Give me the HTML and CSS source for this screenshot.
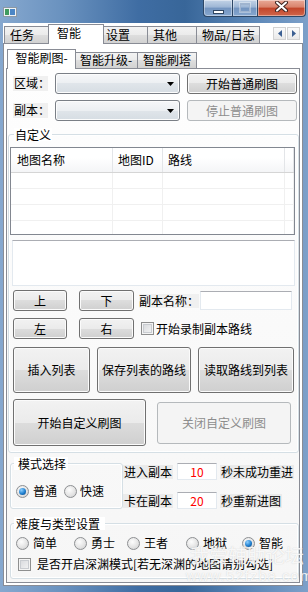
FILE: index.html
```html
<!DOCTYPE html>
<html lang="zh-CN">
<head>
    <meta charset="UTF-8">
    <meta name="viewport" content="width=device-width, initial-scale=1">
    <title>智能刷图</title>
    <link rel="stylesheet" href="styles.css">
</head>
<body>
<div class="window">
    <div class="titlebar">
        <svg class="app-icon" width="14" height="10" viewBox="0 0 14 10">
            <rect x="0.5" y="0.5" width="13" height="9" fill="#eef2f5" stroke="#8c98a4"/>
            <rect x="2" y="2" width="4" height="6" fill="#3f9a5e"/>
            <rect x="7" y="2" width="5" height="6" fill="#4b86c6"/>
        </svg>
        <div class="caption-btns">
            <span class="cap cap-min"><i></i></span>
            <span class="cap cap-max"><i></i></span>
            <span class="cap cap-close">
                <svg width="13" height="11" viewBox="0 0 13 11">
                    <path d="M2 1.5 L11 9.5 M11 1.5 L2 9.5" stroke="#3d2320" stroke-width="4" stroke-linecap="round"/>
                    <path d="M2 1.5 L11 9.5 M11 1.5 L2 9.5" stroke="#fff" stroke-width="2" stroke-linecap="round"/>
                </svg>
            </span>
        </div>
    </div>

    <div class="client">
        <div class="tabstrip outer-strip">
            <span class="tab t-renwu">任务</span>
            <span class="tab t-zhineng active">智能</span>
            <span class="tab t-shezhi">设置</span>
            <span class="tab t-qita">其他</span>
            <span class="tab t-wupin">物品/日志</span>
            <div class="updown">
                <span class="ud-btn">
                    <svg width="4" height="7" viewBox="0 0 4 7"><path d="M4 0 L0 3.5 L4 7 Z" fill="#3b5f92"/></svg>
                </span>
                <span class="ud-btn">
                    <svg width="4" height="7" viewBox="0 0 4 7"><path d="M0 0 L4 3.5 L0 7 Z" fill="#3b5f92"/></svg>
                </span>
            </div>
        </div>

        <div class="tabpage outer-page">
            <div class="tabstrip inner-strip">
                <span class="tab sub-a active">智能刷图-</span>
                <span class="tab sub-b">智能升级-</span>
                <span class="tab sub-c">智能刷塔</span>
            </div>

            <div class="tabpage inner-page">
                <div class="row row-area">
                    <span class="lbl lbl-combo">区域：</span>
                    <div class="combo">
                        <svg width="7" height="4" viewBox="0 0 7 4"><path d="M0 0 H7 L3.5 4 Z" fill="#000"/></svg>
                    </div>
                    <button class="btn btn-normal">开始普通刷图</button>
                </div>
                <div class="row row-copy">
                    <span class="lbl lbl-combo">副本：</span>
                    <div class="combo">
                        <svg width="7" height="4" viewBox="0 0 7 4"><path d="M0 0 H7 L3.5 4 Z" fill="#000"/></svg>
                    </div>
                    <button class="btn btn-normal" disabled>停止普通刷图</button>
                </div>

                <div class="group group-custom">
                    <span class="group-title">自定义</span>
                    <div class="listview">
                        <div class="lv-line lv-head">
                            <span>地图名称</span>
                            <span>地图ID</span>
                            <span>路线</span>
                            <span></span>
                        </div>
                        <div class="lv-line"><span></span><span></span><span></span><span></span></div>
                        <div class="lv-line"><span></span><span></span><span></span><span></span></div>
                        <div class="lv-line"><span></span><span></span><span></span><span></span></div>
                        <div class="lv-line"><span></span><span></span><span></span><span></span></div>
                    </div>
                    <div class="edit memo"></div>

                    <div class="row row-dir">
                        <button class="btn btn-dir">上</button>
                        <button class="btn btn-dir btn-dir2">下</button>
                        <span class="lbl lbl-name">副本名称：</span>
                        <div class="edit edit-name"></div>
                    </div>
                    <div class="row row-lr">
                        <button class="btn btn-dir">左</button>
                        <button class="btn btn-dir btn-dir2">右</button>
                        <span class="check check-record"></span>
                        <span class="check-text">开始录制副本路线</span>
                    </div>

                    <div class="row row-big">
                        <button class="btn btn-insert">插入列表</button>
                        <button class="btn btn-save">保存列表的路线</button>
                        <button class="btn btn-load">读取路线到列表</button>
                    </div>
                    <div class="row row-run">
                        <button class="btn btn-start">开始自定义刷图</button>
                        <button class="btn btn-stop" disabled>关闭自定义刷图</button>
                    </div>
                </div>

                <div class="row row-mode">
                    <div class="group group-mode">
                        <span class="group-title">模式选择</span>
                        <div class="radios mode-radios">
                            <span class="opt"><span class="radio on"></span>普通</span>
                            <span class="opt opt-fast"><span class="radio"></span>快速</span>
                        </div>
                    </div>
                    <div class="timers">
                        <div class="timer-row">
                            <span class="lbl lbl-timer">进入副本</span>
                            <div class="edit edit-num">10</div>
                            <span class="lbl lbl-after">秒未成功重进</span>
                        </div>
                        <div class="timer-row">
                            <span class="lbl lbl-timer">卡在副本</span>
                            <div class="edit edit-num">20</div>
                            <span class="lbl lbl-after">秒重新进图</span>
                        </div>
                    </div>
                </div>

                <div class="group group-level">
                    <span class="group-title">难度与类型设置</span>
                    <div class="level-radios">
                        <span class="opt"><span class="radio"></span>简单</span>
                        <span class="opt"><span class="radio"></span>勇士</span>
                        <span class="opt"><span class="radio"></span>王者</span>
                        <span class="opt"><span class="radio"></span>地狱</span>
                        <span class="opt"><span class="radio on"></span>智能</span>
                    </div>
                    <div class="abyss">
                        <span class="check"></span>
                        <span class="check-text">是否开启深渊模式[若无深渊的地图请别勾选]</span>
                    </div>
                </div>
            </div>
        </div>
    </div>

    <div class="watermark">
        <span class="wm-big">我爱辅助论坛</span>
        <span class="wm-url">www.52fzba.com</span>
    </div>
</div>
</body>
</html>
```

FILE: styles.css
```css
* {
    box-sizing: border-box;
}
body {
    margin: 0;
    font: 12px/14px "Noto Sans CJK SC", "Liberation Sans", sans-serif;
    color: #000;
    background: #6e92bd;
}
button {
    font: inherit;
    color: inherit;
}

/* window frame */
.window {
    position: relative;
    width: 308px;
    height: 592px;
    display: flex;
    flex-direction: column;
    padding: 0 5px 6px 3px;
    overflow: hidden;
    background: linear-gradient(90deg, #86a8cf 0%, #6a92bf 20%, #3f6da3 45%, #386699 60%, #5985b6 80%, #7da0c9 100%);
}
.titlebar {
    height: 23px;
    margin-right: -3px;
    display: flex;
    justify-content: space-between;
    align-items: flex-start;
}
.app-icon {
    margin-top: 7px;
}
.caption-btns {
    display: flex;
}
.cap {
    height: 17px;
    display: flex;
    align-items: center;
    justify-content: center;
    border: 1px solid #2d4766;
    border-top: none;
    box-shadow: inset 0 0 0 1px rgba(255, 255, 255, 0.4);
}
.cap-min,
.cap-max {
    background: linear-gradient(#c3d3e7, #9db6d5 45%, #7394bf 50%, #86a7cf);
}
.cap-min {
    width: 29px;
    border-right: none;
    border-radius: 0 0 0 4px;
}
.cap-min i {
    width: 11px;
    height: 4px;
    margin-top: 7px;
    background: #fff;
    border: 1px solid #2f4560;
}
.cap-max {
    width: 26px;
}
.cap-max i {
    width: 10px;
    height: 9px;
    margin-top: -2px;
    border: 1px solid #9fb4cf;
    border-top-width: 2px;
    box-shadow: 0 0 0 1px rgba(255, 255, 255, 0.35);
}
.cap-close {
    width: 48px;
    border-left: none;
    border-radius: 0 0 4px 0;
    background: linear-gradient(#e9a998, #d9826b 45%, #c2452b 50%, #d0664a);
}
.cap-close svg {
    margin-top: -3px;
}

/* client and tabs */
.client {
    flex: 1;
    display: flex;
    flex-direction: column;
    background: #fff;
}
.tabstrip {
    display: flex;
    align-items: flex-end;
}
.outer-strip {
    height: 20px;
    padding-left: 1px;
}
.inner-strip {
    height: 24px;
    padding-left: 2px;
}
.tab {
    height: 17px;
    margin-left: -1px;
    padding-left: 5px;
    line-height: 15px;
    white-space: nowrap;
    border: 1px solid #898c95;
    border-bottom: none;
    background: linear-gradient(#f3f3f3, #ebebeb 50%, #dedede 50%, #d2d2d2);
}
.tab:first-child {
    margin-left: 0;
}
.tab.active {
    height: 20px;
    margin-bottom: -1px;
    line-height: 16px;
    position: relative;
    z-index: 1;
    background: #fff;
}
.t-renwu { width: 47px; }
.t-zhineng { width: 56px; margin-left: -3px; margin-right: -1px; padding-left: 8px; }
.t-shezhi { width: 46px; padding-left: 3px; }
.t-qita { width: 50px; }
.t-wupin { width: 64px; }

.sub-a, .sub-b, .sub-c {
    padding-left: 0;
    text-align: center;
}
.sub-a { width: 69px; margin-right: -1px; }
.sub-b { width: 64px; height: 16px; line-height: 14px; }
.sub-c { width: 60px; height: 16px; line-height: 14px; }

.updown {
    display: flex;
    gap: 1px;
    align-self: flex-start;
    margin: 4px 3px 0 auto;
}
.ud-btn {
    width: 13px;
    height: 13px;
    display: flex;
    align-items: center;
    justify-content: center;
    border: 1px solid #d3d3d3;
    background: linear-gradient(#fbfbfb, #e9e9e9);
}

.tabpage {
    flex: 1;
    display: flex;
    flex-direction: column;
    border: 1px solid #898c95;
}
.outer-page {
    padding: 0 1px 2px 1px;
    background: #fff;
}
.inner-page {
    margin: 0 1px;
    padding-top: 4px;
    overflow: hidden;
    background: linear-gradient(#fefefe, #f6f6f6);
}

/* common controls */
.row {
    display: flex;
    align-items: center;
}
.lbl {
    height: 14px;
    line-height: 14px;
    white-space: nowrap;
    background: #f0f0f0;
}
.btn {
    height: 21px;
    padding: 0;
    display: flex;
    align-items: center;
    justify-content: center;
    white-space: nowrap;
    border: 1px solid #707070;
    border-radius: 3px;
    background: linear-gradient(#f2f2f2, #ebebeb 50%, #dddddd 50%, #cfcfcf);
    box-shadow: inset 0 0 0 1px #fbfbfb;
}
.btn:disabled {
    color: #8d8d8d;
    border-color: #b5b9bc;
    background: #f4f4f4;
    box-shadow: none;
}
.combo {
    width: 125px;
    height: 21px;
    margin-left: 7px;
    padding-right: 5px;
    display: flex;
    align-items: center;
    justify-content: flex-end;
    border: 1px solid #7a7f86;
    border-radius: 3px;
    background: linear-gradient(#f6f7f9, #eceff2 50%, #e0e5ea 50%, #d6dde3);
    box-shadow: inset 0 0 0 1px #fcfcfc;
}
.edit {
    background: #fff;
    border: 1px solid #e3e9ef;
    border-top-color: #abadb3;
}

.row-area {
    height: 21px;
}
.row-copy {
    height: 21px;
    margin-top: 6px;
}
.lbl-combo {
    width: 35px;
    height: 15px;
    margin-left: 6px;
    padding-left: 1px;
}
.btn-normal {
    width: 110px;
    margin-left: 7px;
}

/* group boxes */
.group {
    display: flex;
    flex-direction: column;
    border: 1px solid #d5dfe5;
    border-radius: 3px;
    box-shadow: inset 0 0 0 1px #fff;
}
.group-title {
    align-self: flex-start;
    height: 13px;
    margin-top: -7px;
    line-height: 13px;
    background: #fff;
}
.group-custom {
    width: 291px;
    margin: 13px 0 0 1px;
    padding-bottom: 6px;
}
.group-custom .group-title {
    margin-left: 5px;
    padding: 0 1px;
}

/* list view */
.listview {
    width: 285px;
    height: 88px;
    margin: 6px 0 0 1px;
    overflow: hidden;
    border: 1px solid #828790;
    background: #fff;
}
.lv-line {
    display: grid;
    grid-template-columns: 102px 50px 122px 1fr;
    height: 16px;
    border-bottom: 1px solid #f0f0f0;
}
.lv-line span {
    border-right: 1px solid #f0f0f0;
}
.lv-head {
    height: 25px;
    line-height: 24px;
    border-bottom: 1px solid #d5d5d5;
    background: linear-gradient(#fff, #fff 40%, #f4f5f7);
}
.lv-head span {
    padding-left: 5px;
    border-right: 1px solid #e3e5e8;
}
.lv-head span:first-child {
    padding-left: 6px;
}

.memo {
    width: 283px;
    height: 46px;
    margin: 5px 0 0 3px;
}

.row-dir,
.row-lr {
    height: 21px;
}
.row-dir {
    margin-top: 4px;
}
.row-lr {
    margin-top: 7px;
}
.btn-dir {
    width: 54px;
    margin-left: 4px;
}
.btn-dir2 {
    width: 55px;
    margin-left: 12px;
}
.lbl-name {
    margin-left: 5px;
}
.edit-name {
    width: 92px;
    height: 19px;
    margin-left: 1px;
}

.check {
    width: 13px;
    height: 13px;
    flex: none;
    border: 1px solid #8e8f8f;
    background: linear-gradient(135deg, #d4d6da, #f7f7f7);
    box-shadow: inset 0 0 0 1px #f4f4f4, inset 0 0 0 2px #c9ccd1;
}
.check-record {
    margin-left: 7px;
}
.check-text {
    margin-left: 2px;
    white-space: nowrap;
}

.row-big {
    height: 46px;
    margin-top: 8px;
    align-items: stretch;
}
.row-big .btn {
    height: 46px;
}
.btn-insert {
    width: 77px;
    margin-left: 4px;
}
.btn-save {
    width: 94px;
    margin-left: 7px;
}
.btn-load {
    width: 96px;
    margin-left: 7px;
}
.row-run {
    height: 47px;
    margin-top: 6px;
}
.btn-start {
    width: 133px;
    height: 47px;
    margin-left: 4px;
}
.btn-stop {
    width: 134px;
    height: 42px;
    margin-left: 11px;
}

/* radio buttons */
.opt {
    display: flex;
    align-items: center;
    gap: 4px;
    white-space: nowrap;
}
.radio {
    width: 13px;
    height: 13px;
    flex: none;
    display: flex;
    align-items: center;
    justify-content: center;
    border: 1px solid #8d8f92;
    border-radius: 50%;
    background: radial-gradient(circle at 40% 35%, #fdfdfd, #e2e2e2 60%, #c9cacc);
}
.radio.on::after {
    content: "";
    width: 7px;
    height: 7px;
    border-radius: 50%;
    background: radial-gradient(circle at 35% 30%, #8fd0ff, #1f7fcf 55%, #0b3f78);
}

/* mode and timers */
.row-mode {
    margin-top: 10px;
    align-items: flex-start;
}
.group-mode {
    width: 113px;
    height: 46px;
    margin-left: 3px;
}
.group-mode .group-title {
    margin-left: 3px;
    padding: 0 2px 0 4px;
}
.mode-radios {
    display: flex;
    margin: 14px 0 0 5px;
}
.opt-fast {
    gap: 3px;
    margin-left: 7px;
}
.timers {
    display: flex;
    flex-direction: column;
    gap: 12px;
}
.timer-row {
    height: 17px;
    display: flex;
    align-items: center;
}
.lbl-timer {
    width: 50px;
    padding-left: 1px;
    background: #ebebeb;
}
.edit-num {
    width: 40px;
    height: 17px;
    margin-left: 4px;
    line-height: 15px;
    text-align: center;
    color: #f00;
}
.lbl-after {
    margin-left: 3px;
    padding: 0 1px;
    background: #ebebeb;
}

/* difficulty */
.group-level {
    width: 289px;
    height: 56px;
    margin: 14px 0 0 3px;
}
.group-level .group-title {
    margin-left: 3px;
    padding: 0 5px 0 2px;
}
.level-radios {
    display: grid;
    grid-template-columns: 58px 53px 59px 56px auto;
    margin: 6px 0 0 5px;
    height: 13px;
}
.abyss {
    display: flex;
    align-items: center;
    margin: 8px 0 0 7px;
}
.abyss .check-text {
    margin-left: 6px;
}

/* forum watermark over the capture */
.watermark {
    position: absolute;
    left: 186px;
    top: 543px;
    display: flex;
    flex-direction: column;
    color: rgba(255, 255, 255, 0.85);
    text-shadow: 0 0 1px rgba(160, 160, 160, 0.5);
    pointer-events: none;
}
.wm-big {
    font-size: 19px;
    line-height: 24px;
    padding-left: 4px;
}
.wm-url {
    font-family: "Liberation Sans", sans-serif;
    font-size: 15px;
    line-height: 18px;
    letter-spacing: 1px;
}
```
